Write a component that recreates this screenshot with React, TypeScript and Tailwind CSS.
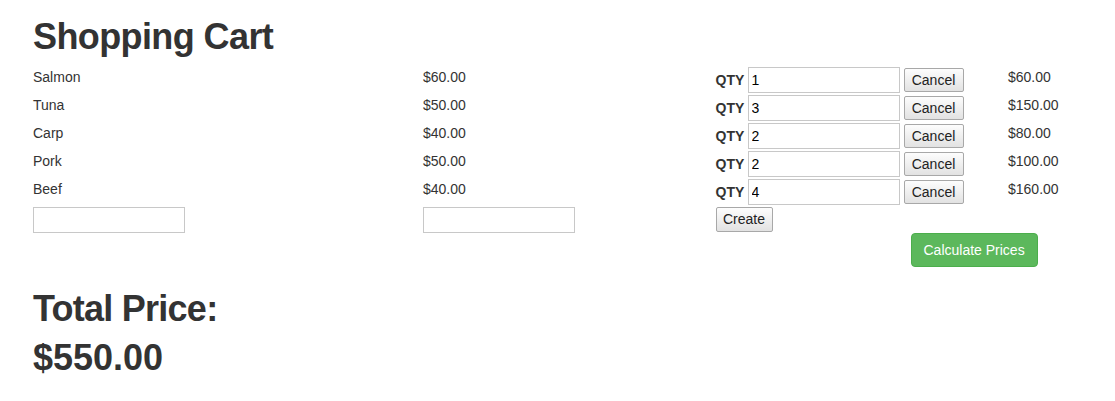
import React from "react";

const items = [
  { name: "Salmon", price: "$60.00", qty: "1", total: "$60.00" },
  { name: "Tuna", price: "$50.00", qty: "3", total: "$150.00" },
  { name: "Carp", price: "$40.00", qty: "2", total: "$80.00" },
  { name: "Pork", price: "$50.00", qty: "2", total: "$100.00" },
  { name: "Beef", price: "$40.00", qty: "4", total: "$160.00" },
];

const grayBtn =
  "border border-[#a8a8a8] rounded-[2px] bg-gradient-to-b from-[#fdfdfd] to-[#e2e2e2] text-[#222] text-[14px] leading-none flex items-center justify-center";

export default function App() {
  return (
    <div className="min-h-[401px] w-[1115px] overflow-hidden bg-white pl-[18px] font-['Liberation_Sans',Arial,sans-serif] text-[14px] leading-[20px] text-[#333]">
      <h1 className="mt-[17px] mb-[10px] pl-[15px] text-[36px] leading-[39.6px] font-bold tracking-[-0.6px]">
        Shopping Cart
      </h1>
      <div className="flex w-[1170px]">
        <div className="w-[390px] px-[15px]">
          {items.map((it) => (
            <div key={it.name} className="h-[28px]">
              {it.name}
            </div>
          ))}
          <input
            type="text"
            className="block h-[26px] w-[152px] border border-[#c8c8c8] px-[3px] text-[13px] outline-none"
          />
        </div>
        <div className="w-[292.5px] px-[15px]">
          {items.map((it) => (
            <div key={it.name} className="h-[28px]">
              {it.price}
            </div>
          ))}
          <input
            type="text"
            className="block h-[26px] w-[152px] border border-[#c8c8c8] px-[3px] text-[13px] outline-none"
          />
        </div>
        <div className="w-[292.5px] px-[15px]">
          {items.map((it) => (
            <div key={it.name} className="mb-[2px] flex h-[26px] items-center">
              <span className="w-[32px] font-bold">QTY</span>
              <input
                type="text"
                defaultValue={it.qty}
                className="h-[26px] w-[152px] border border-[#c8c8c8] px-[3px] text-[14px] text-black outline-none"
              />
              <button className={`${grayBtn} ml-[4px] h-[24px] w-[60px]`}>Cancel</button>
            </div>
          ))}
          <button className={`${grayBtn} h-[25px] w-[57px]`}>Create</button>
        </div>
        <div className="w-[195px] px-[15px]">
          {items.map((it) => (
            <div key={it.name} className="h-[28px]">
              {it.total}
            </div>
          ))}
        </div>
      </div>
      <div className="flex w-[1170px] pl-[892.5px]">
        <button className="h-[34px] rounded-[4px] border border-[#4cae4c] bg-[#5cb85c] px-[12px] text-[14px] leading-[20px] text-white">
          Calculate Prices
        </button>
      </div>
      <h1 className="mt-[22px] mb-[10px] pl-[15px] text-[36px] leading-[39.6px] font-bold tracking-[-0.75px]">
        Total Price:
      </h1>
      <h1 className="pl-[15px] text-[36px] leading-[39.6px] font-bold">$550.00</h1>
    </div>
  );
}
